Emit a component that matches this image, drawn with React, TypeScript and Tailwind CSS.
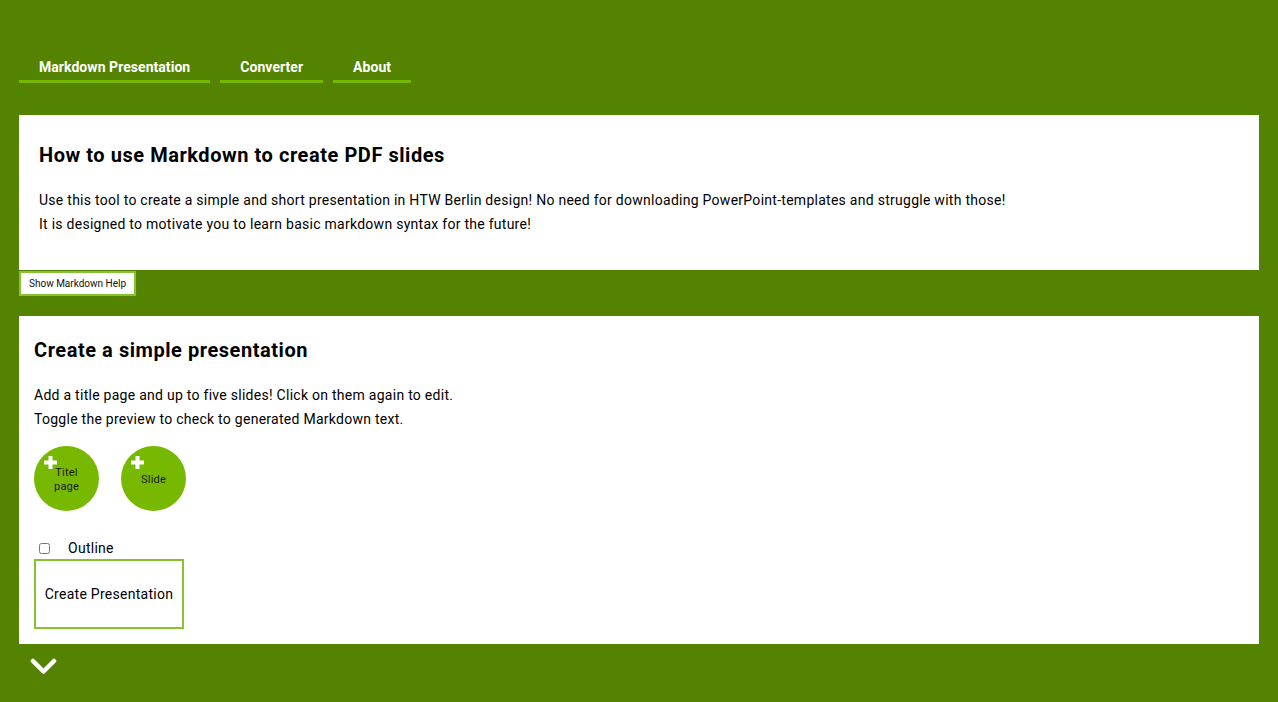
import React from 'react';

const font = { fontFamily: '"Roboto", "Liberation Sans", sans-serif' };

function NavItem({ label }: { label: string }) {
    return (
        <a className="block px-5 pb-[3px] border-b-[3px] border-[#76b900] text-white font-bold text-[14px] leading-[20px] tracking-[0.05px]">
            {label}
        </a>
    );
}

function AddCircle({ label }: { label: React.ReactNode }) {
    return (
        <button className="relative w-[65px] h-[65px] rounded-full bg-[#76b900] flex items-center justify-center text-[11px] leading-[14px] text-[#1a1a1a] tracking-[0.2px]">
            <svg className="absolute left-[10px] top-[10px]" width="13" height="13" viewBox="0 0 13 13">
                <rect x="4.5" y="0" width="4" height="13" fill="white" />
                <rect x="0" y="4.5" width="13" height="4" fill="white" />
            </svg>
            <span className="pt-[2px]">{label}</span>
        </button>
    );
}

export default function App() {
    return (
        <main className="min-h-[702px] bg-[#538300] px-[19px] pb-6 text-black" style={font}>
            {/* Nav */}
            <nav className="flex gap-[10px] pt-[57px] pb-[32px]">
                <NavItem label="Markdown Presentation" />
                <NavItem label="Converter" />
                <NavItem label="About" />
            </nav>

            {/* Intro */}
            <section className="bg-white px-5 pt-[28px] pb-[34px]">
                <h1 className="text-[20px] font-bold leading-[24px] mb-[21px] tracking-[0.55px]">How to use Markdown to create PDF slides</h1>
                <p className="text-[14px] leading-[24px] tracking-[0.27px]">
                    Use this tool to create a simple and short presentation in HTW Berlin design! No need for downloading PowerPoint-templates and struggle with those!<br />
                    It is designed to motivate you to learn basic markdown syntax for the future!
                </p>
            </section>

            <button className="mt-[1px] bg-white border-2 border-[#86c232] px-[8px] h-[25px] text-[10px] text-[#111]">
                Show Markdown Help
            </button>

            {/* Create */}
            <section className="mt-[20px] bg-white px-[15px] pt-[22px] pb-[15px]">
                <h2 className="text-[20px] font-bold leading-[24px] mb-[21px] tracking-[0.55px]">Create a simple presentation</h2>
                <p className="text-[14px] leading-[24px] tracking-[0.27px]">
                    Add a title page and up to five slides! Click on them again to edit.<br />
                    Toggle the preview to check to generated Markdown text.
                </p>
                <div className="flex gap-[22px] mt-[15px]">
                    <AddCircle label={<>Titel<br />page</>} />
                    <AddCircle label="Slide" />
                </div>
                <label className="flex items-center mt-[27px] ml-[5px] text-[14px] leading-[20px] tracking-[0.27px]">
                    <input type="checkbox" className="w-[11px] h-[11px] mr-[18px]" />
                    Outline
                </label>
                <button className="mt-[1px] w-[150px] h-[70px] border-2 border-[#86c232] text-[14px] tracking-[0.27px]">
                    Create Presentation
                </button>
            </section>

            <div className="pt-[14px] pl-[11px]">
                <svg width="27" height="17" viewBox="0 0 27 17" fill="none">
                    <path d="M3 3 L13.5 13.5 L24 3" stroke="white" strokeWidth="4.5" strokeLinecap="round" strokeLinejoin="round" />
                </svg>
            </div>
        </main>
    );
}
